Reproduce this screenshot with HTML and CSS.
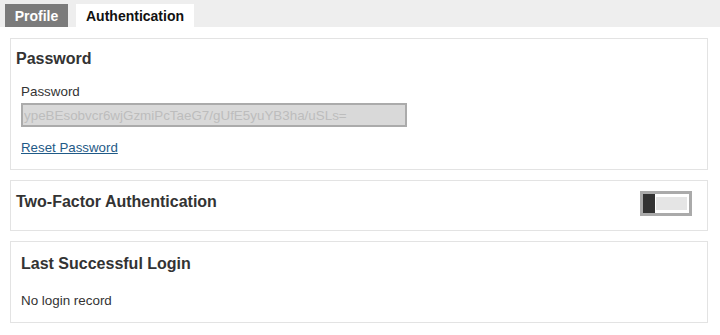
FILE: index.html
```html
<!DOCTYPE html>
<html lang="en">
<head>
    <meta charset="UTF-8">
    <meta name="viewport" content="width=device-width, initial-scale=1.0">
    <link rel="stylesheet" href="styles.css">
    <title>Account Settings</title>
</head>
<body>
    <nav class="tabs">
        <a class="tab tab-inactive" href="#">Profile</a>
        <a class="tab tab-active" href="#">Authentication</a>
    </nav>

    <main class="content">
        <section class="panel panel-password">
            <h2 class="panel-title">Password</h2>
            <label class="field-label" for="password">Password</label>
            <input class="field-input" type="text" id="password" value="ypeBEsobvcr6wjGzmiPcTaeG7/gUfE5yuYB3ha/uSLs=" disabled>
            <a class="reset-link" href="#">Reset Password</a>
        </section>

        <section class="panel panel-twofactor">
            <h2 class="panel-title">Two-Factor Authentication</h2>
            <span class="toggle">
                <span class="toggle-knob"></span>
                <span class="toggle-track"></span>
            </span>
        </section>

        <section class="panel panel-login">
            <h2 class="panel-title">Last Successful Login</h2>
            <p class="login-text">No login record</p>
        </section>
    </main>
</body>
</html>
```

FILE: styles.css
```css
body {
    margin: 0;
    padding: 0;
    font-family: "Liberation Sans", Arial, sans-serif;
    color: #333;
    background-color: #fff;
}

.tabs {
    display: flex;
    gap: 8px;
    height: 23px;
    padding: 4px 0 0 5px;
    background-color: #eeeeee;
}

.tab {
    display: block;
    height: 23px;
    line-height: 24px;
    font-size: 14px;
    font-weight: bold;
    text-decoration: none;
}

.tab-inactive {
    width: 63px;
    text-align: center;
    background-color: #7b7b7b;
    color: #fff;
}

.tab-active {
    width: 118px;
    text-align: center;
    background-color: #fff;
    color: #111;
}

.content {
    padding: 11px 12px 0 10px;
}

.panel {
    border: 1px solid #e3e3e3;
    margin-bottom: 10px;
}

.panel-title {
    margin: 0;
    font-size: 16px;
    font-weight: bold;
    color: #333;
}

.panel-password {
    height: 130px;
    padding: 0 0 0 5px;
}

.panel-password .panel-title {
    padding-top: 11px;
    height: 30px;
}

.field-label {
    display: block;
    margin: 4px 0 0 5px;
    font-size: 13.4px;
    line-height: 16px;
}

.field-input {
    display: block;
    box-sizing: border-box;
    width: 386px;
    height: 24px;
    margin: 3px 0 0 5px;
    padding: 0 0 0 1px;
    border: 2px solid #ababab;
    background-color: #d9d9d9;
    color: #bdbdbd;
    font-family: "Liberation Sans", Arial, sans-serif;
    font-size: 13.4px;
}

.reset-link {
    display: inline-block;
    margin: 13px 0 0 5px;
    font-size: 13.3px;
    color: #1f5a87;
    text-decoration: underline;
}

.panel-twofactor {
    display: flex;
    justify-content: space-between;
    height: 49px;
    padding: 0 15px 0 5px;
}

.panel-twofactor .panel-title {
    padding-top: 12px;
}

.toggle {
    display: flex;
    align-items: center;
    box-sizing: border-box;
    width: 52px;
    height: 25px;
    margin-top: 10px;
    border: 3px solid #aaaaaa;
    background-color: #fff;
}

.toggle-knob {
    width: 12px;
    height: 19px;
    background-color: #333;
}

.toggle-track {
    width: 31px;
    height: 13px;
    margin-left: 1px;
    background-color: #e5e5e5;
}

.panel-login {
    height: 80px;
    padding: 0 0 0 10px;
}

.panel-login .panel-title {
    padding-top: 13px;
}

.login-text {
    margin: 20px 0 0 0;
    font-size: 13.4px;
}
```
